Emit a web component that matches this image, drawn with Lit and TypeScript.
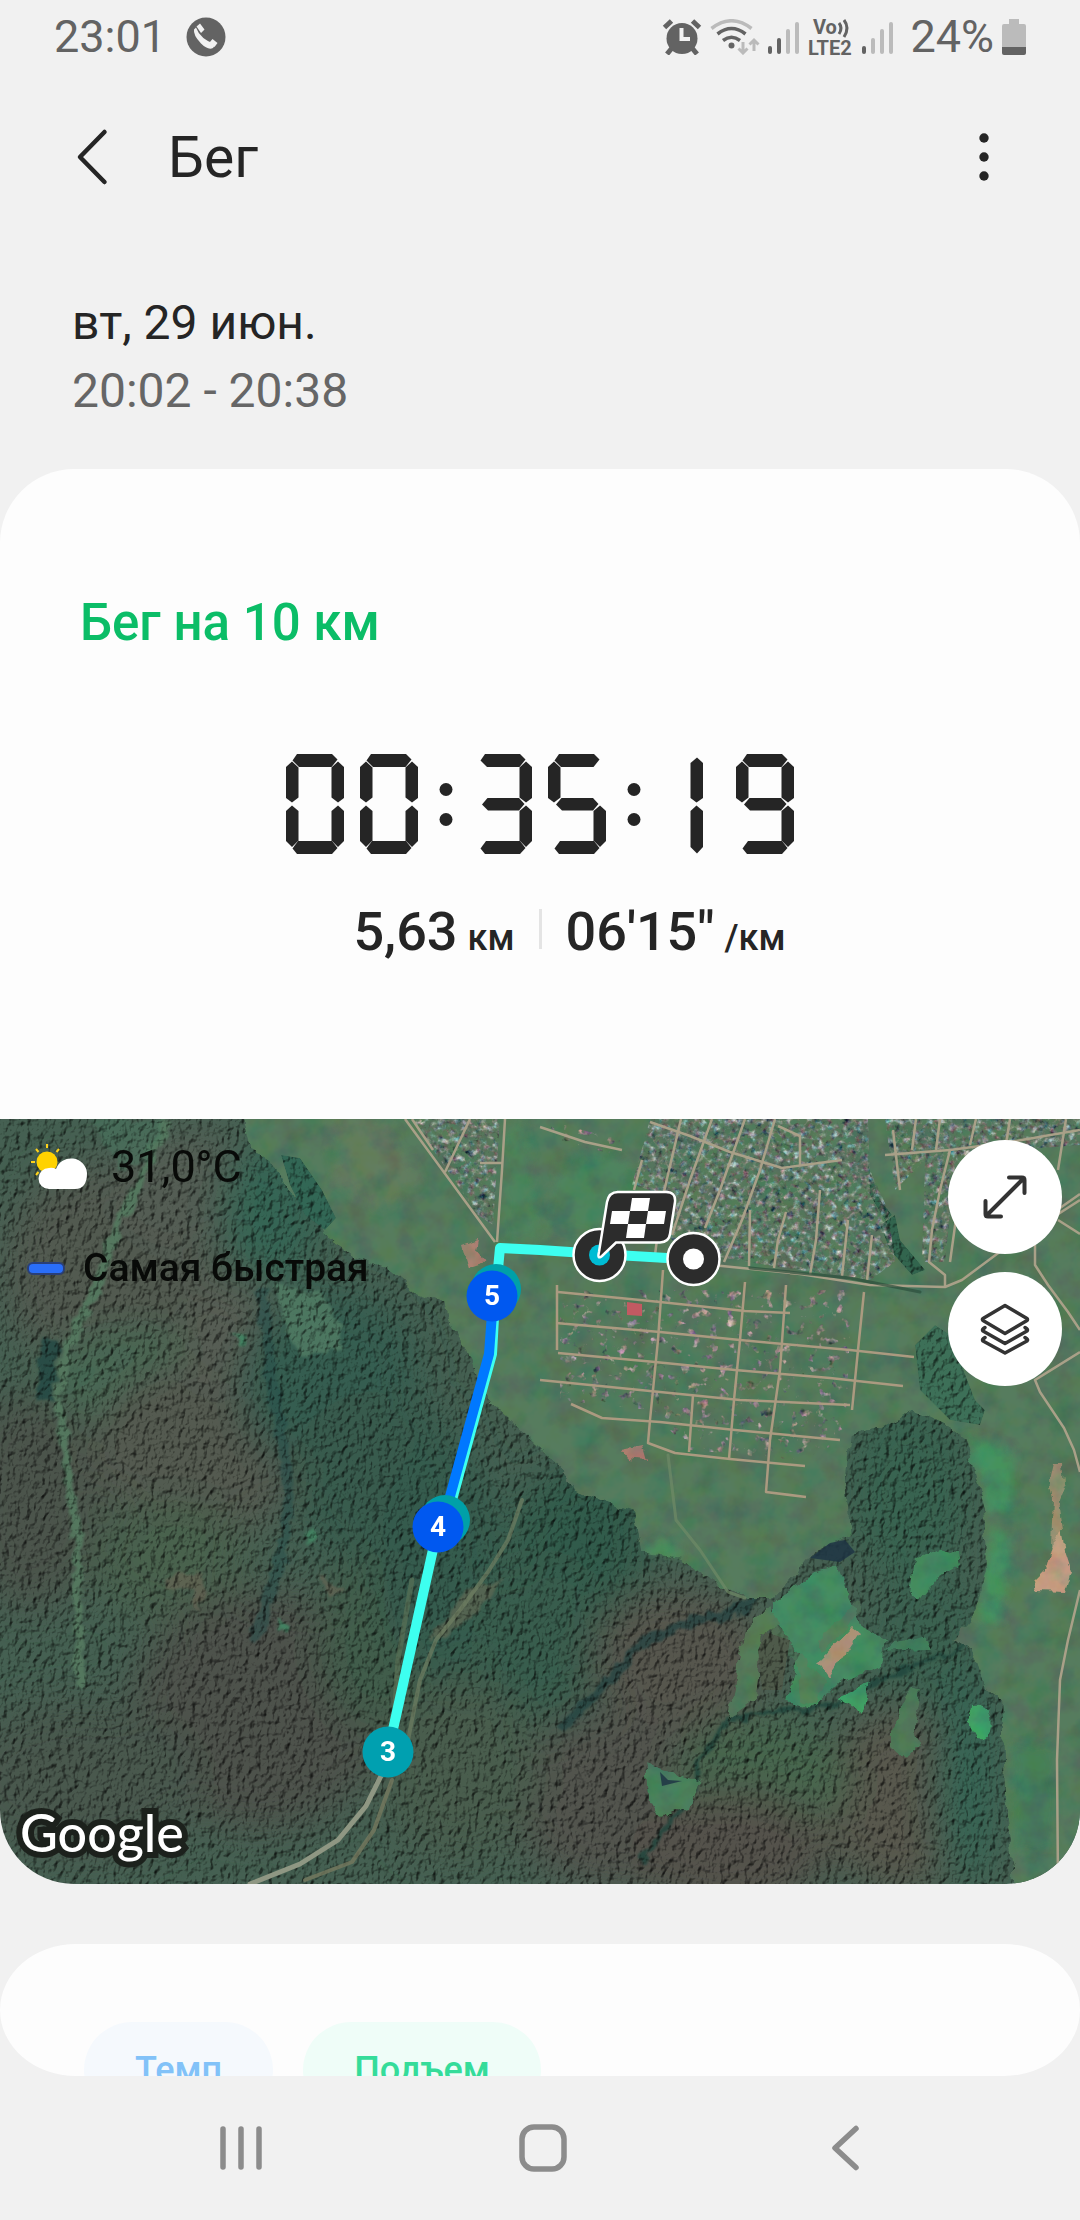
import { LitElement, html, svg, css } from "lit";
import { customElement, property } from "lit/decorators.js";

/* Seven-segment readout: segment outlines inside a 58 x 100 cell. */
const SEGMENTS: Record<string, string> = {
  a: "M11 0H46L51.500 5.500 45.500 13H13L6.500 6.500Z",
  b: "M52 7.500 45.500 13.500V43.500L52 48.500 58 44V13Z",
  c: "M52 51.500 45.500 57V86.500L52 93 58 87V57Z",
  d: "M12 87H46L51.500 94 46 100H11L6.500 94.500Z",
  e: "M6 51.500 12.500 57V86.500L6 93 0 87V57Z",
  f: "M6 7.500 12.500 13.500V43.500L6 48.500 0 44V13Z",
  g: "M13.500 44H45L50.500 50 45 56.500H14L8 50.500Z",
  u: "M35 3.500 41 9V44L34.500 48.500 28.500 44V9Z",
  l: "M34.500 51.500 41 57V93L35 99.500 28.500 93V57Z",
};

const DIGITS: Record<string, string> = {
  "0": "abcdef",
  "1": "ul",
  "2": "abged",
  "3": "abgcd",
  "4": "fgbc",
  "5": "afgcd",
  "6": "afgedc",
  "7": "abc",
  "8": "abcdefg",
  "9": "abcdfg",
};

@customElement("segment-clock")
class SegmentClock extends LitElement {
  @property() value = "";

  static styles = css`
    :host {
      display: block;
    }
    .clock {
      display: flex;
      justify-content: center;
      height: 100px;
      fill: #252525;
    }
    .digit {
      width: 58px;
      height: 100px;
    }
    .digit + .digit {
      margin-left: 16px;
    }
    .colon {
      width: 56px;
      height: 100px;
    }
  `;

  render() {
    return html`<div class="clock" role="timer" aria-label=${this.value}>
      ${[...this.value].map((ch) =>
        ch === ":"
          ? html`<svg class="colon" viewBox="0 0 56 100"><circle cx="28" cy="35.500" r="6.500" /><circle cx="28" cy="65.500" r="6.500" /></svg>`
          : html`<svg class="digit" viewBox="0 0 58 100">${[...DIGITS[ch]].map((s) => svg`<path d=${SEGMENTS[s]} />`)}</svg>`
      )}
    </div>`;
  }
}

const ROADS = [
  "M405 1119 495 1242M505 1119 502 1170 497 1242M412 1119 433 1150M470 1119 445 1172M480 1163H502",
  "M500 1250 600 1256 722 1266 800 1274 870 1285 945 1287 962 1280 1005 1248 1080 1200",
  "M681 1119 662 1200 655 1255M712 1119 690 1180 672 1235M745 1119 720 1190 705 1228M775 1119 760 1170 742 1220 724 1262",
  "M786 1212 778 1240 774 1268M820 1190 816 1240 810 1275M848 1220 842 1276M872 1235 867 1280M750 1210 749 1266",
  "M540 1127 585 1142 622 1150M650 1122 690 1136 730 1152 782 1168 842 1160M885 1155 950 1150 1010 1142 1080 1130",
  "M642 1160 634 1190M778 1126 800 1136 800 1165M893 1130 900 1190M916 1119 912 1150M940 1119 936 1150M976 1119 970 1145M1010 1119 1005 1150M1066 1119 1058 1170",
  "M950 1150 940 1190 932 1230 929 1262 945 1275 945 1287M960 1190 950 1262",
];

const GRID = [
  "M663 1270 658 1340 650 1420 648 1443 675 1453 730 1459 805 1466",
  "M745 1282 740 1340 734 1400 729 1459M786 1285 780 1370 770 1440 766 1492 806 1497",
  "M864 1292 858 1350 852 1410M693 1395 689 1452",
  "M558 1292 640 1300 660 1302 745 1311 790 1313M556 1323 660 1332 740 1340 850 1350 914 1357",
  "M558 1353 655 1362 735 1370 830 1378 903 1386M540 1380 650 1391 740 1400 850 1405",
  "M571 1404 602 1418 660 1422 735 1430 840 1440M557 1285V1350",
];

const EAST_ROADS = [
  "M1035 1245V1265L1048 1285 1068 1312 1080 1330M1080 1352 1035 1380 1040 1392 1064 1428 1074 1450 1080 1472",
  "M1058 1220 1080 1234M1060 1208 1080 1194",
  "M1080 1590 1068 1640 1060 1680 1057 1760 1058 1884",
];

/* Blurred tints that vary the forest canopy: cx, cy, rx, ry, colour */
const TINTS: [number, number, number, number, string][] = [
  [110, 1270, 110, 110, "#4d554c"],
  [190, 1190, 80, 60, "#50584f"],
  [140, 1390, 110, 60, "#43634f"],
  [30, 1500, 70, 110, "#474f46"],
  [200, 1450, 110, 90, "#4f554c"],
  [235, 1340, 50, 60, "#535950"],
  [270, 1210, 50, 70, "#325f50"],
  [330, 1380, 90, 90, "#33584b"],
  [380, 1480, 90, 90, "#34564a"],
  [170, 1560, 80, 60, "#445b48"],
  [260, 1710, 130, 120, "#494e47"],
  [80, 1780, 120, 80, "#445349"],
  [380, 1640, 60, 90, "#3c5846"],
  [440, 1560, 60, 120, "#305749"],
  [580, 1540, 70, 70, "#2f5746"],
  [540, 1640, 70, 80, "#345948"],
  [680, 1660, 90, 70, "#515149"],
  [620, 1800, 110, 90, "#4d5049"],
  [900, 1800, 80, 90, "#525249"],
  [760, 1780, 90, 60, "#436049"],
  [730, 1850, 100, 60, "#504d47"],
  [910, 1490, 60, 90, "#345d4c"],
  [930, 1640, 60, 70, "#375c4c"],
  [965, 1780, 30, 110, "#335e4f"],
  [600, 1500, 50, 40, "#2f5746"],
  [460, 1770, 80, 90, "#445849"],
];

@customElement("route-map")
class RouteMap extends LitElement {
  static styles = css`
    :host {
      display: block;
    }
    .canvas {
      display: block;
      width: 100%;
      height: auto;
    }
    .road {
      fill: none;
      stroke: #a9a088;
      stroke-width: 2.5;
      stroke-linejoin: round;
    }
    .grid {
      stroke: #ab9a80;
    }
    .km {
      font: 700 28px Roboto, sans-serif;
      fill: #fff;
      text-anchor: middle;
    }
    .route {
      fill: none;
      stroke: #3dfff0;
      stroke-width: 10;
      stroke-linejoin: round;
    }
    .fast {
      stroke: #0078ff;
    }
  `;

  private pin(x: number, y: number, label: string, fill: string) {
    return svg`<circle cx=${x} cy=${y} r="25.500" fill=${fill} /><text class="km" x=${x} y=${y + 9}>${label}</text>`;
  }

  private terrain() {
    return svg`
      <g filter="url(#canopy)">
        <rect x="0" y="1119" width="1080" height="765" fill="#415b4d" />
        <g filter="url(#soft)">
          ${TINTS.map(([x, y, rx, ry, c]) => svg`<ellipse cx=${x} cy=${y} rx=${rx} ry=${ry} fill=${c} />`)}
        </g>
        <g fill="none" stroke-linejoin="round" filter="url(#ragged)">
          <path d="M168 1119 140 1180 112 1240 96 1290 68 1345 58 1400 68 1470 77 1540 80 1690" stroke="#4f7059" stroke-width="9" />
          <path d="M262 1290 270 1370 284 1450 290 1500 278 1570 255 1640" stroke="#214a47" stroke-width="12" opacity=".5" />
          <path d="M50 1340 44 1400" stroke="#1f4440" stroke-width="17" opacity=".8" />
          <path d="M765 1585 740 1610 680 1625 640 1645 600 1690 560 1730" stroke="#1e3f3d" stroke-width="10" opacity=".7" />
          <path d="M980 1640 880 1680 830 1708 760 1712 730 1720 700 1760 690 1800 640 1860" stroke="#1d4138" stroke-width="5" opacity=".8" />
          <path d="M92 1119H165L150 1160 120 1170Z" fill="#44705a" opacity=".5" />
          <path d="M275 1285 320 1295 342 1325 340 1350 300 1355 285 1325Z" fill="#4d765f" opacity=".8" />
          <path d="M233 1335 246 1334 247 1342 238 1345ZM280 1620 292 1622 288 1634 278 1630ZM304 1530 314 1528 314 1542 306 1542Z" fill="#3f7a5c" />
          <path d="M162 1575 205 1572 200 1615 190 1590 165 1590ZM318 1575 345 1590 330 1600Z" fill="#6b5f4f" opacity=".5" />
          <path d="M465 1590 500 1580 480 1610 440 1640 430 1640Z" fill="#6b6650" opacity=".5" />
        </g>
      </g>
      <g filter="url(#grass)">
        <path fill="#547a5c" d="M238 1100H1100V1900H1016L1005 1800 1002 1700 985 1690 972 1650 952 1640 975 1615 986 1570 984 1510 965 1440 945 1425 912 1410 880 1428 850 1434 846 1480 852 1535 815 1550 795 1575 772 1598 745 1598 710 1580 680 1558 640 1552 634 1512 600 1500 575 1490 560 1470 543 1452 515 1425 490 1402 477 1375 468 1350 450 1325 445 1302 415 1292 385 1268 355 1258 326 1238 322 1220 285 1185 268 1160 250 1150Z" />
        <path fill="#458a61" d="M773 1604 815 1572 838 1566 848 1590 862 1628 886 1640 882 1665 840 1682 815 1708 785 1700 800 1652 773 1622Z" />
        <path fill="#5a7d5c" d="M773 1622 800 1652 818 1676 826 1680 815 1706 800 1700 798 1668 770 1630ZM818 1640 840 1620 858 1600 862 1612 822 1652Z" opacity=".7" />
        <path fill="#537b58" d="M735 1680 745 1630 770 1605 780 1625 762 1635 756 1700 728 1720Z" />
        <path fill="#3fa066" d="M836 1697 870 1682 864 1714Z" />
        <path fill="#43895f" d="M915 1558 930 1551 945 1548 958 1552 960 1566 936 1580 920 1600 910 1590Z" />
        <path fill="#41a267" d="M972 1706Q990 1702 991 1725 990 1744 975 1740 966 1722 972 1706Z" />
        <path fill="#4f7a58" d="M912 1688 920 1690 915 1728 920 1745 905 1760 890 1745 890 1730Z" />
        <path fill="#4a7f5d" d="M645 1764 700 1782 690 1808 658 1818 648 1800Z" />
        <path fill="#417e5c" d="M895 1642 925 1635 932 1650 885 1652Z" />
        <g filter="url(#feather)">
          <path fill="#448f60" d="M965 1435 1012 1450 1012 1510H986L982 1480ZM992 1530 1012 1532 1000 1620 980 1620Z" />
          <path fill="#3a7f5a" d="M1010 1745H1052V1850H1015Z" opacity=".6" />
          <path fill="#468c61" d="M645 1544 672 1543 682 1560 650 1552Z" />
          <path fill="#6c7c5f" d="M330 1119H385L420 1180 380 1210 335 1180Z" opacity=".5" />
          <path fill="#47865d" d="M560 1160 620 1150 640 1190 600 1230 545 1230ZM505 1130 525 1125 540 1240 505 1240Z" opacity=".6" />
        </g>
        <path fill="#a98f78" d="M818 1662 852 1627 859 1633 829 1678Z" />
        <path fill="#c19d80" d="M1052 1545 1060 1530 1064 1550 1071 1572 1065 1592 1036 1591 1034 1580 1046 1568Z" />
        <path fill="#ae9377" d="M1054 1462H1062L1064 1485 1058 1500 1062 1528 1052 1545 1054 1500 1050 1480Z" opacity=".8" />
        <path fill="#b98073" d="M462 1246 480 1240 478 1252 486 1262 468 1268ZM622 1450 642 1446 646 1460 628 1458Z" opacity=".85" />
      </g>
      <path fill="#1f3544" d="M810 1558 830 1543 845 1540 855 1552 840 1562ZM660 1772 668 1780 682 1781 662 1786Z" opacity=".85" />
      <g filter="url(#canopy)">
        <path fill="#2f6150" d="M281 1155 300 1158 322 1190 336 1218 325 1230 305 1215 290 1185Z" />
        <path fill="#3a6a53" d="M915 1345 935 1325 950 1335 975 1400 985 1410 980 1425 950 1420 920 1390Z" />
        <path fill="#2f5f4a" d="M880 1225 895 1215 900 1240 925 1270 912 1275 890 1250ZM868 1165 880 1200 892 1215 885 1220 870 1195Z" />
        <path fill="#4a5546" d="M765 1632 790 1640 782 1690 762 1690 758 1650Z" />
      </g>
      <g filter="url(#houses)" opacity=".8">
        <path d="M412 1119H500L493 1225 478 1215Z" />
        <path d="M650 1119H868L870 1170 888 1210 895 1262 870 1280 800 1270 722 1258 672 1240 650 1190 632 1185Z" />
        <path d="M885 1119H1080V1145L1010 1150 955 1165 945 1262 922 1262 925 1160 895 1190Z" />
      </g>
      <g filter="url(#sparse)" opacity=".8">
        <path d="M560 1290H850V1330L845 1440 800 1460 690 1450 650 1410 560 1400Z" />
        <path d="M545 1120 620 1140 615 1155 560 1140Z" />
      </g>
      <path fill="#c25a62" d="M627 1302 642 1304V1316L627 1315Z" />
      <g class="road">${ROADS.map((d) => svg`<path d=${d} />`)}</g>
      <g class="road grid">${GRID.map((d) => svg`<path d=${d} />`)}</g>
      <g class="road">${EAST_ROADS.map((d) => svg`<path d=${d} />`)}</g>
      <g fill="none" stroke-linecap="round" stroke-linejoin="round">
        <path d="M750 1268 850 1278 920 1292" stroke="#2c4f3c" stroke-width="3" opacity=".7" />
        <path d="M522 1500 508 1540 488 1572 460 1610 436 1640 420 1680 408 1740" stroke="#6f7f62" stroke-width="4" opacity=".7" />
        <path d="M412 1580 398 1660 394 1720" stroke="#5f7458" stroke-width="5" opacity=".6" />
        <path d="M383 1772 366 1806 338 1840 300 1864 250 1884" stroke="#8f9783" stroke-width="5" />
        <path d="M392 1780 374 1830 352 1862 305 1880" stroke="#76795f" stroke-width="4" opacity=".8" />
        <path d="M668 1455 676 1520 700 1550 728 1592 745 1598" stroke="#6f8a66" stroke-width="3" opacity=".7" />
      </g>`;
  }

  render() {
    return html`<svg class="canvas" viewBox="0 1119 1080 765" role="img" aria-label="Карта маршрута">
      <defs>
        <filter id="soft" x="-10%" y="-10%" width="120%" height="120%"><feGaussianBlur stdDeviation="20" /></filter>
        <filter id="feather" x="-10%" y="-10%" width="120%" height="120%"><feGaussianBlur stdDeviation="4" /></filter>
        <filter id="ragged" x="-5%" y="-5%" width="110%" height="110%" color-interpolation-filters="sRGB">
          <feTurbulence type="fractalNoise" baseFrequency=".07" numOctaves="3" seed="7" result="w" />
          <feDisplacementMap in="SourceGraphic" in2="w" scale="14" xChannelSelector="R" yChannelSelector="G" result="d" />
          <feGaussianBlur in="d" stdDeviation="1" />
        </filter>
        <filter id="canopy" x="0" y="0" width="100%" height="100%" color-interpolation-filters="sRGB">
          <feTurbulence type="fractalNoise" baseFrequency=".17 .13" numOctaves="3" seed="4" result="n" />
          <feDiffuseLighting in="n" surfaceScale="2.800" diffuseConstant="1.300" lighting-color="#ffffff" result="l">
            <feDistantLight azimuth="225" elevation="50" />
          </feDiffuseLighting>
          <feComposite in="SourceGraphic" in2="l" operator="arithmetic" k1=".9" k2=".16" result="m" />
          <feComposite in="m" in2="SourceAlpha" operator="in" />
        </filter>
        <filter id="grass" x="0" y="0" width="100%" height="100%" color-interpolation-filters="sRGB">
          <feTurbulence type="fractalNoise" baseFrequency=".07" numOctaves="3" seed="5" result="w" />
          <feDisplacementMap in="SourceGraphic" in2="w" scale="10" xChannelSelector="R" yChannelSelector="G" result="d" />
          <feTurbulence type="fractalNoise" baseFrequency=".04" numOctaves="4" seed="9" result="n" />
          <feColorMatrix in="n" type="matrix" values=".5 0 0 0 .72  0 .3 0 0 .82  0 0 .3 0 .82  0 0 0 0 1" result="t" />
          <feComposite in="d" in2="t" operator="arithmetic" k1="1.020" result="m" />
          <feComposite in="m" in2="d" operator="in" />
        </filter>
        <filter id="houses" x="0" y="0" width="100%" height="100%" color-interpolation-filters="sRGB">
          <feTurbulence type="fractalNoise" baseFrequency=".16" numOctaves="3" seed="12" result="n" />
          <feColorMatrix in="n" type="matrix" values="1 .8 0 0 -.42  .3 1.200 .2 0 -.38  .3 1 .5 0 -.44  0 0 3 0 -1.050" result="t" />
          <feComposite in="t" in2="SourceAlpha" operator="in" />
        </filter>
        <filter id="sparse" x="0" y="0" width="100%" height="100%" color-interpolation-filters="sRGB">
          <feTurbulence type="fractalNoise" baseFrequency=".11" numOctaves="3" seed="21" result="n" />
          <feColorMatrix in="n" type="matrix" values="1.400 0 0 0 -.15  .9 .3 0 0 -.13  .9 0 .4 0 -.15  0 0 0 7 -4.100" result="t" />
          <feComposite in="t" in2="SourceAlpha" operator="in" />
        </filter>
      </defs>
      ${this.terrain()}
      <path class="route" d="M667 1258 600 1254 540 1250 500 1248 495 1300 492 1354 452 1500 438 1527 388 1752" />
      <path class="route fast" d="M493 1300 489 1354 449 1500 440 1522" />
      <circle cx="496" cy="1289" r="25" fill="#00a0a8" />
      <circle cx="445" cy="1520" r="25" fill="#00a0a8" />
      ${this.pin(492, 1296, "5", "#0058f0")} ${this.pin(438, 1527, "4", "#0058f0")} ${this.pin(388, 1752, "3", "#00a0b0")}
      <g fill="#2c2c2c" stroke="#fff" stroke-width="2.500">
        <circle cx="599.500" cy="1255" r="26" />
        <circle cx="599.500" cy="1255" r="10.500" fill="#00bcd4" stroke="none" />
        <path d="M618 1192H666Q676 1192 675 1202L670 1234Q669 1242 660 1242.500H616L602 1256Q597 1260 599 1252L607 1202Q609 1192 618 1192Z" />
        <circle cx="693.500" cy="1259" r="26" />
        <circle cx="693.500" cy="1259" r="10.500" fill="#fff" stroke="none" />
      </g>
      <g fill="#fff">
        <path d="M632 1198H650L648 1211H630ZM612 1211H630L628 1224H610ZM648 1211H666L664 1224H646ZM628 1224H646L644 1238H626Z" />
      </g>
    </svg>`;
  }
}

@customElement("app-root")
class AppRoot extends LitElement {
  static styles = css`
    :host {
      display: block;
      font-family: Roboto, "Noto Sans", sans-serif;
      color: #252525;
    }
    .screen {
      display: flex;
      flex-direction: column;
      height: 100vh;
      background: #f1f1f1;
    }
    button {
      display: flex;
      align-items: center;
      justify-content: center;
      margin: 0;
      padding: 0;
      border: 0;
      background: none;
      font: inherit;
      color: inherit;
    }
    svg {
      display: block;
      flex: none;
    }
    .status {
      display: flex;
      flex: none;
      align-items: center;
      justify-content: space-between;
      height: 74px;
      padding: 0 54px;
      font-size: 45px;
      line-height: 54px;
      color: #636363;
    }
    .status-side {
      display: flex;
      align-items: center;
      gap: 8px;
    }
    .call {
      margin-left: 12px;
    }
    .battery-level {
      padding-left: 8px;
    }
    .tiny {
      font: 700 20px Roboto, sans-serif;
      fill: #636363;
    }
    .header {
      display: flex;
      flex: none;
      align-items: center;
      height: 166px;
      padding: 0 68px 0 56px;
    }
    .icon-button {
      width: 72px;
      height: 72px;
    }
    .title {
      flex: 1;
      margin: 0 0 0 40px;
      padding-top: 2px;
      font-size: 57px;
      font-weight: 400;
      line-height: 68px;
    }
    .more {
      width: 56px;
      height: 72px;
    }
    .content {
      flex: 1;
      min-height: 0;
      overflow: hidden;
      border-radius: 0 0 76px 76px / 0 0 66px 66px;
    }
    .when {
      padding: 49px 72px 44px;
      font-size: 48px;
      line-height: 68px;
    }
    .when p {
      margin: 0;
    }
    .hours {
      color: #666;
    }
    .card {
      background: #fdfdfd;
      border-radius: 74px;
      overflow: hidden;
    }
    .summary {
      padding: 124px 80px 155px;
    }
    .goal {
      margin: 0 0 101px;
      font-size: 51px;
      font-weight: 500;
      line-height: 60px;
      color: #0bbd67;
    }
    .stats {
      display: grid;
      grid-template-columns: 1fr 3px 1fr;
      column-gap: 24px;
      margin-top: 46px;
      font-size: 54px;
      font-weight: 500;
      line-height: 64px;
    }
    .stat {
      display: flex;
      align-items: baseline;
      gap: 10px;
    }
    .distance {
      justify-content: flex-end;
    }
    .unit {
      font-size: 36px;
      line-height: 42px;
    }
    .divider {
      height: 40px;
      margin-top: 9px;
      background: #e4e4e4;
    }
    .map {
      position: relative;
    }
    .overlay {
      position: absolute;
      top: 21px;
      left: 27px;
      display: grid;
      row-gap: 51px;
      color: #080a08;
    }
    .weather {
      display: flex;
      align-items: center;
      gap: 20px;
      font-size: 45px;
      line-height: 54px;
    }
    .legend {
      display: flex;
      align-items: center;
      gap: 18px;
      font-size: 39px;
      font-weight: 500;
      line-height: 46px;
    }
    .swatch {
      box-sizing: border-box;
      width: 38px;
      height: 13px;
      border: 2px solid #2a3f77;
      border-radius: 6px;
      background: #2a6ef8;
    }
    .tools {
      position: absolute;
      top: 21px;
      right: 18px;
      display: grid;
      gap: 18px;
    }
    .tool {
      width: 114px;
      height: 114px;
      border-radius: 50%;
      background: #fff;
    }
    .brand {
      position: absolute;
      left: 20px;
      bottom: 20px;
      font-family: Lato, sans-serif;
      font-size: 52px;
      font-weight: 500;
      line-height: 64px;
      color: #fff;
      -webkit-text-stroke: 12px #1c211c;
      paint-order: stroke fill;
    }
    .charts {
      display: flex;
      gap: 30px;
      margin-top: 60px;
      padding: 78px 84px 120px;
      border-radius: 76px 76px 0 0 / 66px 66px 0 0;
    }
    .chip {
      height: 96px;
      padding: 0 51px;
      border-radius: 48px;
      font-size: 36px;
      font-weight: 500;
      line-height: 42px;
    }
    .pace {
      background: #f5f9fd;
      color: #82c2f8;
    }
    .climb {
      background: #effdf8;
      color: #35dc9a;
    }
    .nav {
      display: grid;
      flex: none;
      grid-template-columns: repeat(3, 1fr);
      height: 144px;
      padding: 0 84px 0 90px;
      color: #8c8c8c;
    }
  `;

  private signal(level: number) {
    return html`<svg width="32" height="36" viewBox="0 0 32 36" stroke-width="4" stroke-linecap="round">
      ${[28, 20, 11, 4].map(
        (top, i) => svg`<path d=${`M${2 + i * 9} ${top + 1}V33`} stroke=${i < level ? "#636363" : "#bbbbbb"} />`
      )}
    </svg>`;
  }

  render() {
    return html`<div class="screen">
      <div class="status">
        <div class="status-side">
          <span>23:01</span>
          <svg class="call" width="40" height="40" viewBox="0 0 40 40">
            <circle cx="20" cy="20" r="19.500" fill="#636363" />
            <path d="M8 12.500 10 10.500Q14 22 29.500 27.500L27 31Q22 33.500 15 26.500 7 18 8 12.500ZM10.500 9.500 14 6.500 18.500 12.500 15 16ZM23.500 25.500 26.500 22 31.500 26 28.500 30Z" fill="#f1f1f1" />
          </svg>
        </div>
        <div class="status-side">
          <svg width="40" height="36" viewBox="0 0 40 36">
            <g stroke="#636363" stroke-width="5"><path d="M2.500 8.500 9.500 2M30.500 2 37.500 8.500" /><path d="M5 35 10 29M35 35 30 29" /></g>
            <circle cx="20" cy="19.500" r="15.500" fill="#636363" />
            <path d="M19.500 9V20H28" fill="none" stroke="#f1f1f1" stroke-width="4" />
          </svg>
          <svg width="50" height="36" viewBox="0 0 50 36" fill="none" stroke-width="3.500">
            <path d="M1.500 9.500Q21.500-6 41.500 9.500" stroke="#bbb" />
            <path d="M7.500 15Q21.500 4 35.500 15M13 21.500Q21.500 15 30 21.500" stroke="#636363" />
            <circle cx="21.500" cy="26.500" r="3" fill="#636363" />
            <path d="M33 23V33M28.500 29.500 33 34 37.500 29.500M44 32V21M39.500 25.500 44 21 48.500 25.500" stroke="#bbb" stroke-width="3" />
          </svg>
          ${this.signal(2)}
          <svg width="46" height="46" viewBox="0 -5 46 46">
            <text class="tiny" x="5" y="15">Vo</text>
            <text class="tiny" x="0" y="36">LTE2</text>
            <path d="M31 4Q35 9 31 15M36 1Q42 9 36 18" fill="none" stroke="#636363" stroke-width="3" />
          </svg>
          ${this.signal(1)}
          <span class="battery-level">24%</span>
          <svg width="24" height="36" viewBox="0 0 24 36">
            <path d="M7 0H17V5H22Q24 5 24 7V28H0V7Q0 5 2 5H7Z" fill="#bbb" />
            <path d="M0 28H24V34Q24 36 22 36H2Q0 36 0 34Z" fill="#636363" />
          </svg>
        </div>
      </div>

      <header class="header">
        <button class="icon-button" aria-label="Назад">
          <svg width="36" height="60" viewBox="0 0 36 60" fill="none" stroke="#252525" stroke-width="4.500" stroke-linecap="round" stroke-linejoin="round">
            <path d="M30.500 5 6 30 30.500 55" />
          </svg>
        </button>
        <h1 class="title">Бег</h1>
        <button class="more" aria-label="Ещё">
          <svg width="10" height="48" viewBox="0 0 10 48" fill="#252525">
            <circle cx="5" cy="5" r="4.700" /><circle cx="5" cy="24" r="4.700" /><circle cx="5" cy="43" r="4.700" />
          </svg>
        </button>
      </header>

      <main class="content">
        <div class="when">
          <p>вт, 29 июн.</p>
          <p class="hours">20:02 - 20:38</p>
        </div>
        <section class="card">
          <div class="summary">
            <h2 class="goal">Бег на 10 км</h2>
            <segment-clock value="00:35:19"></segment-clock>
            <div class="stats">
              <div class="stat distance"><span>5,63</span><span class="unit">км</span></div>
              <span class="divider"></span>
              <div class="stat"><span>06'15"</span><span class="unit">/км</span></div>
            </div>
          </div>
          <div class="map">
            <route-map></route-map>
            <div class="overlay">
              <div class="weather">
                <svg width="64" height="54" viewBox="0 0 64 54">
                  <circle cx="20" cy="22" r="10.500" fill="#ffd200" />
                  <path d="M20 4V8M9 9 11.500 12M32 9 29.500 12M4 22H8M9 35 11.500 32" stroke="#ffd21a" stroke-width="2" />
                  <path d="M22 49A10 10 0 0 1 22 28 11 11 0 0 1 29 29 16 16 0 0 1 60 33Q60 49 48 49Z" fill="#fff" />
                </svg>
                <span>31,0°C</span>
              </div>
              <div class="legend"><span class="swatch"></span><span>Самая быстрая</span></div>
            </div>
            <div class="tools">
              <button class="tool" aria-label="Развернуть карту">
                <svg width="46" height="46" viewBox="0 0 46 46" fill="none" stroke="#333" stroke-width="4" stroke-linecap="round" stroke-linejoin="round">
                  <path d="M4 42 42 4M27 3.500H40Q42.500 3.500 42.500 6V19M3.500 27V40Q3.500 42.500 6 42.500H19" />
                </svg>
              </button>
              <button class="tool" aria-label="Слои карты">
                <svg width="50" height="52" viewBox="0 0 50 52" fill="none" stroke="#333" stroke-width="3.500" stroke-linecap="round" stroke-linejoin="round">
                  <path d="M25 2.500 47 15.500Q48 16.500 47 17.500L25 30.500 3 17.500Q2 16.500 3 15.500Z" />
                  <path d="M5 24.500 3 26Q2 27 3 28L25 40.500 47 28Q48 27 47 26L45 24.500" />
                  <path d="M5 34.500 3 36Q2 37 3 38L25 50 47 38Q48 37 47 36L45 34.500" />
                </svg>
              </button>
            </div>
            <span class="brand">Google</span>
          </div>
        </section>
        <section class="card charts">
          <button class="chip pace">Темп</button>
          <button class="chip climb">Подъем</button>
        </section>
      </main>

      <nav class="nav">
        <button aria-label="Недавние">
          <svg width="44" height="48" viewBox="0 0 44 48" stroke="currentColor" stroke-width="5.500" stroke-linecap="round">
            <path d="M4 5V43M22 5V43M40 5V43" />
          </svg>
        </button>
        <button aria-label="Главный экран">
          <svg width="50" height="50" viewBox="0 0 50 50" fill="none" stroke="currentColor" stroke-width="5.500">
            <rect x="4" y="4" width="42" height="42" rx="12" />
          </svg>
        </button>
        <button aria-label="Назад">
          <svg width="32" height="48" viewBox="0 0 32 48" fill="none" stroke="currentColor" stroke-width="5.500" stroke-linecap="round" stroke-linejoin="round">
            <path d="M27 4.500 6 24 27 43.500" />
          </svg>
        </button>
      </nav>
    </div>`;
  }
}
